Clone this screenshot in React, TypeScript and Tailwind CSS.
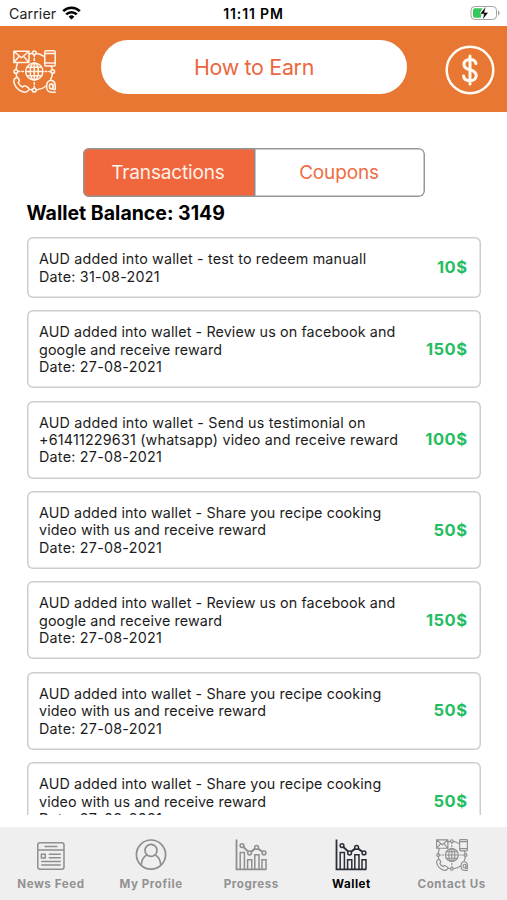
import type { ReactNode } from "react";

const transactions = [
  {
    lines: ["AUD added into wallet - test to redeem manuall"],
    date: "31-08-2021",
    amount: "10$",
    tracking: "tracking-[0.19px]",
  },
  {
    lines: [
      "AUD added into wallet - Review us on facebook and",
      "google and receive reward",
    ],
    date: "27-08-2021",
    amount: "150$",
    tracking: "tracking-[0.12px]",
  },
  {
    lines: [
      "AUD added into wallet - Send us testimonial on",
      "+61411229631 (whatsapp) video and receive reward",
    ],
    date: "27-08-2021",
    amount: "100$",
    tracking: "tracking-[0.2px]",
  },
  {
    lines: [
      "AUD added into wallet - Share you recipe cooking",
      "video with us and receive reward",
    ],
    date: "27-08-2021",
    amount: "50$",
    tracking: "tracking-[0.12px]",
  },
  {
    lines: [
      "AUD added into wallet - Review us on facebook and",
      "google and receive reward",
    ],
    date: "27-08-2021",
    amount: "150$",
    tracking: "tracking-[0.12px]",
  },
  {
    lines: [
      "AUD added into wallet - Share you recipe cooking",
      "video with us and receive reward",
    ],
    date: "27-08-2021",
    amount: "50$",
    tracking: "tracking-[0.12px]",
  },
  {
    lines: [
      "AUD added into wallet - Share you recipe cooking",
      "video with us and receive reward",
    ],
    date: "27-08-2021",
    amount: "50$",
    tracking: "tracking-[0.12px]",
  },
];

function ContactIcon({ className }: { className: string }) {
  return (
    <svg
      viewBox="0 0 42 42"
      className={className}
      fill="none"
      stroke="currentColor"
      strokeWidth="1.5"
      strokeLinejoin="round"
      strokeLinecap="round"
    >
      {/* envelope */}
      <path d="M.8 1.2h14.8v11H.8z M.8 1.2l7.4 6.4 7.4-6.4 M.8 12.2l5.3-6 M15.6 12.2l-5.3-6" />
      {/* phone */}
      <rect x="31" y=".8" width="10.2" height="14.8" rx="1.2" />
      <path d="M31 3.4h10.2 M31 12.6h10.2" />
      {/* ring nodes */}
      <circle cx="20.8" cy="2.8" r="1.8" />
      <circle cx="2.8" cy="21" r="1.8" />
      <circle cx="38.8" cy="21" r="1.8" />
      <circle cx="20.8" cy="39.2" r="1.8" />
      <path d="M15.8 3.8l3.2-.7 M22.6 3.1c3 .5 5.6 1.6 8.2 3.3 M4.6 12.5c-.9 2-1.4 4.4-1.6 6.7 M37.4 15.8l1.1 3.4 M3 22.8l.8 4 M38.6 22.8c-.3 2.3-.9 4.2-1.8 6 M16 38.3l3 .7 M22.6 39c3.8-.5 6.8-1.5 9.6-3.6" />
      <path d="M20.8 4.8v1.8 M20.8 8.6v1.6 M20.8 31.8v1.6 M20.8 35.4v1.8 M4.8 21h1.8 M8.6 21h1.6 M31.4 21H33 M35 21h1.8" />
      {/* globe */}
      <circle cx="20.8" cy="21" r="8.4" />
      <ellipse cx="20.8" cy="21" rx="4" ry="8.4" />
      <path d="M20.8 12.6v16.8 M12.4 21h16.8 M13.6 16.8h14.4 M13.6 25.2h14.4" />
      {/* handset */}
      <path d="M3.2 26.8c-2.2 1-2.8 3.2-2 5.6 1.4 4.2 4.2 7 8.4 8.4 2.4.8 4.8.2 5.8-2 .4-1 0-1.6-.8-2.2l-2.6-1.6c-1-.5-1.6-.1-2.6 1.2-2.2-1-3.6-2.4-4.4-4.4 1.4-1.2 1.6-1.8 1-2.8l-1.4-1.9c-.4-.5-.8-.6-1.4-.3z" />
      {/* at sign */}
      <path d="M41.3 41.2h-3.5c-3.2 0-5-2.4-5-5.6 0-3.6 1.7-5.8 4.2-5.8s4.3 2.2 4.3 5.8v3h-2.2v-5" />
      <ellipse cx="37.3" cy="35.6" rx="1.7" ry="2.5" />
    </svg>
  );
}

function NewsIcon() {
  return (
    <svg
      viewBox="0 0 28 28"
      className="mt-[3px] size-7"
      fill="none"
      stroke="currentColor"
      strokeWidth="1.5"
    >
      <rect x=".8" y=".8" width="26.2" height="26.4" rx="2.2" />
      <path d="M.8 8h26.2 M7.5 4.6h13 M11.8 12.3h12 M11.8 15.8h12 M4.2 19.4h19.6 M4.2 23h19.6" />
      <rect x="4.4" y="12.2" width="3.8" height="3.8" />
    </svg>
  );
}

function ProfileIcon() {
  return (
    <svg
      viewBox="0 0 32 32"
      className="size-8"
      fill="none"
      stroke="currentColor"
      strokeWidth="1.7"
    >
      <circle cx="16" cy="15.6" r="14.6" />
      <circle cx="16" cy="11.4" r="6" />
      <path d="M6.2 26.4c.4-5.8 3-9.4 6.4-10.6 M25.8 26.4c-.4-5.8-3-9.4-6.4-10.6" />
    </svg>
  );
}

function ChartIcon() {
  return (
    <svg
      viewBox="0 0 32 32"
      className="size-8"
      fill="none"
      stroke="currentColor"
      strokeWidth="1.5"
    >
      <path d="M1.5.5v29.8h30" strokeWidth="1.8" />
      <path d="M5.2 30V13.6h4.2V30 M12.6 30v-9.2h4.2V30 M19.8 30V15.8H24V30 M27 30v-9.2h4V30" />
      <circle cx="7" cy="6.6" r="1.9" />
      <circle cx="14.6" cy="14" r="1.9" />
      <circle cx="21.6" cy="8.4" r="1.9" />
      <circle cx="29" cy="13.9" r="1.9" />
      <path d="M8.4 8l4.8 4.6 M16.1 12.8l4-3.2 M23.1 9.6l4.3 3.1" strokeWidth="2" />
    </svg>
  );
}

function Tab({
  label,
  active,
  children,
}: {
  label: string;
  active?: boolean;
  children: ReactNode;
}) {
  return (
    <div
      className={
        active
          ? "flex w-[100.2px] flex-col items-center text-[#000]"
          : "flex w-[100.2px] flex-col items-center text-[#929292]"
      }
    >
      <div
        className={
          active
            ? "flex h-8 items-center text-[#2b2f38]"
            : "flex h-8 items-center text-[#8f8f8f]"
        }
      >
        {children}
      </div>
      <span className="mt-[5px] text-[11.6px] leading-4 font-bold tracking-[0.55px] whitespace-nowrap">
        {label}
      </span>
    </div>
  );
}

export default function App() {
  return (
    <div className="flex h-[900px] w-[507px] flex-col overflow-hidden bg-white font-['Inter',sans-serif] text-black">
      <div className="grid h-[25.5px] shrink-0 grid-cols-3 items-center px-[9px]">
        <div className="flex items-center gap-[6px] pt-px text-[14.2px] tracking-[0.1px] text-[#222]">
          <span>Carrier</span>
          <svg viewBox="0 0 19 14" className="h-[14px] w-[19px]">
            <g fill="none" stroke="#000" strokeWidth="2.6">
              <path d="M1.2 5.2a11.8 11.8 0 0 1 16.6 0" />
              <path d="M4.2 8.4a7.6 7.6 0 0 1 10.6 0" />
            </g>
            <path d="M9.5 13.6L6.6 10.8a4.1 4.1 0 0 1 5.8 0z" />
          </svg>
        </div>
        <div className="pt-px text-center text-[14px] font-semibold tracking-[0.85px] whitespace-nowrap">
          11:11 PM
        </div>
        <div className="flex justify-end">
          <svg viewBox="0 0 31 16" className="-mr-[3px] h-4 w-[31px]">
            <rect x="1" y="1.5" width="25.5" height="13" rx="3.8" fill="none" stroke="#a3a3a3" />
            <path d="M28 5.5c2 .6 2 4.4 0 5z" fill="#a3a3a3" />
            <path d="M5 3.3h7.5L9.8 8.8h1.8l-.8 4H5A2 2 0 0 1 3 10.8V5.3a2 2 0 0 1 2-2z" fill="#35c759" />
            <path d="M15.8 1.6l-5.7 7.3h3.9l-1.5 5.9 5.8-7.3h-3.9z" fill="#000" stroke="#fff" strokeWidth=".4" />
          </svg>
        </div>
      </div>

      <header className="flex h-[86px] shrink-0 items-center bg-[#e87733] pl-[13px]">
        <ContactIcon className="mt-[6px] size-[43px] text-[#fff4e8]" />
        <div className="mb-[3px] ml-[45px] flex h-[54px] w-[306px] items-center justify-center rounded-full bg-white text-[21.4px] tracking-[-0.3px] text-[#ec6740]">
          How to Earn
        </div>
        <svg
          viewBox="0 0 50 50"
          className="mt-[2px] ml-[38px] size-[50px]"
          fill="none"
          stroke="#fffaf2"
          strokeLinecap="round"
        >
          <circle cx="25" cy="25" r="23.3" strokeWidth="2.5" />
          <path
            d="M31 18.6c-.5-2.6-2.8-4.2-6-4.2-3.7 0-6 1.9-6 5 0 3.4 2.5 4.5 6 5.4 3.8 1 6.2 2.2 6.2 5.7 0 3.3-2.5 5.3-6.2 5.3s-6.1-1.9-6.4-4.9 M25 11v28"
            strokeWidth="3"
          />
        </svg>
      </header>

      <main className="flex h-[703px] shrink-0 flex-col overflow-hidden px-[26.5px] pt-[36px]">
        <div className="relative flex h-[49px] w-[342px] shrink-0 self-center overflow-hidden rounded-[6px] text-[19px] tracking-[-0.15px]">
          <div className="flex w-[171px] items-center justify-center bg-[#f0673d] pt-[2px] text-[#fff0e8]">
            Transactions
          </div>
          <div className="flex flex-1 items-center justify-center pt-[2px] text-[#ee6d45] shadow-[inset_1.5px_0_0_#888]">
            Coupons
          </div>
          <div className="pointer-events-none absolute inset-0 rounded-[6px] shadow-[inset_0_0_0_1.5px_#969696]" />
        </div>
        <h1 className="mt-[4px] h-6 shrink-0 text-[19.5px] leading-6 font-bold whitespace-nowrap">
          Wallet Balance: 3149
        </h1>
        <div className="mt-[12.8px] flex flex-col gap-[12.4px]">
          {transactions.map((item, i) => (
            <div
              key={i}
              className="flex shrink-0 items-center justify-between rounded-[6px] py-[12.9px] pr-[13px] pl-[12.5px] shadow-[inset_0_0_0_1.5px_#cdcdcd]"
            >
              <div className="text-[14.3px] leading-[17.4px] whitespace-nowrap text-[#1c1c1c]">
                {item.lines.map((line) => (
                  <div key={line} className={item.tracking}>
                    {line}
                  </div>
                ))}
                <div className="tracking-[0.25px]">Date: {item.date}</div>
              </div>
              <span className="text-[16.5px] font-bold tracking-[0.5px] text-[#25bd62]">
                {item.amount}
              </span>
            </div>
          ))}
        </div>
      </main>

      <nav className="mt-auto flex h-[73.5px] shrink-0 bg-[#efefef] pt-[12px] pl-[0.8px]">
        <Tab label="News Feed">
          <NewsIcon />
        </Tab>
        <Tab label="My Profile">
          <ProfileIcon />
        </Tab>
        <Tab label="Progress">
          <ChartIcon />
        </Tab>
        <Tab label="Wallet" active>
          <ChartIcon />
        </Tab>
        <Tab label="Contact Us">
          <ContactIcon className="size-8" />
        </Tab>
      </nav>
    </div>
  );
}
